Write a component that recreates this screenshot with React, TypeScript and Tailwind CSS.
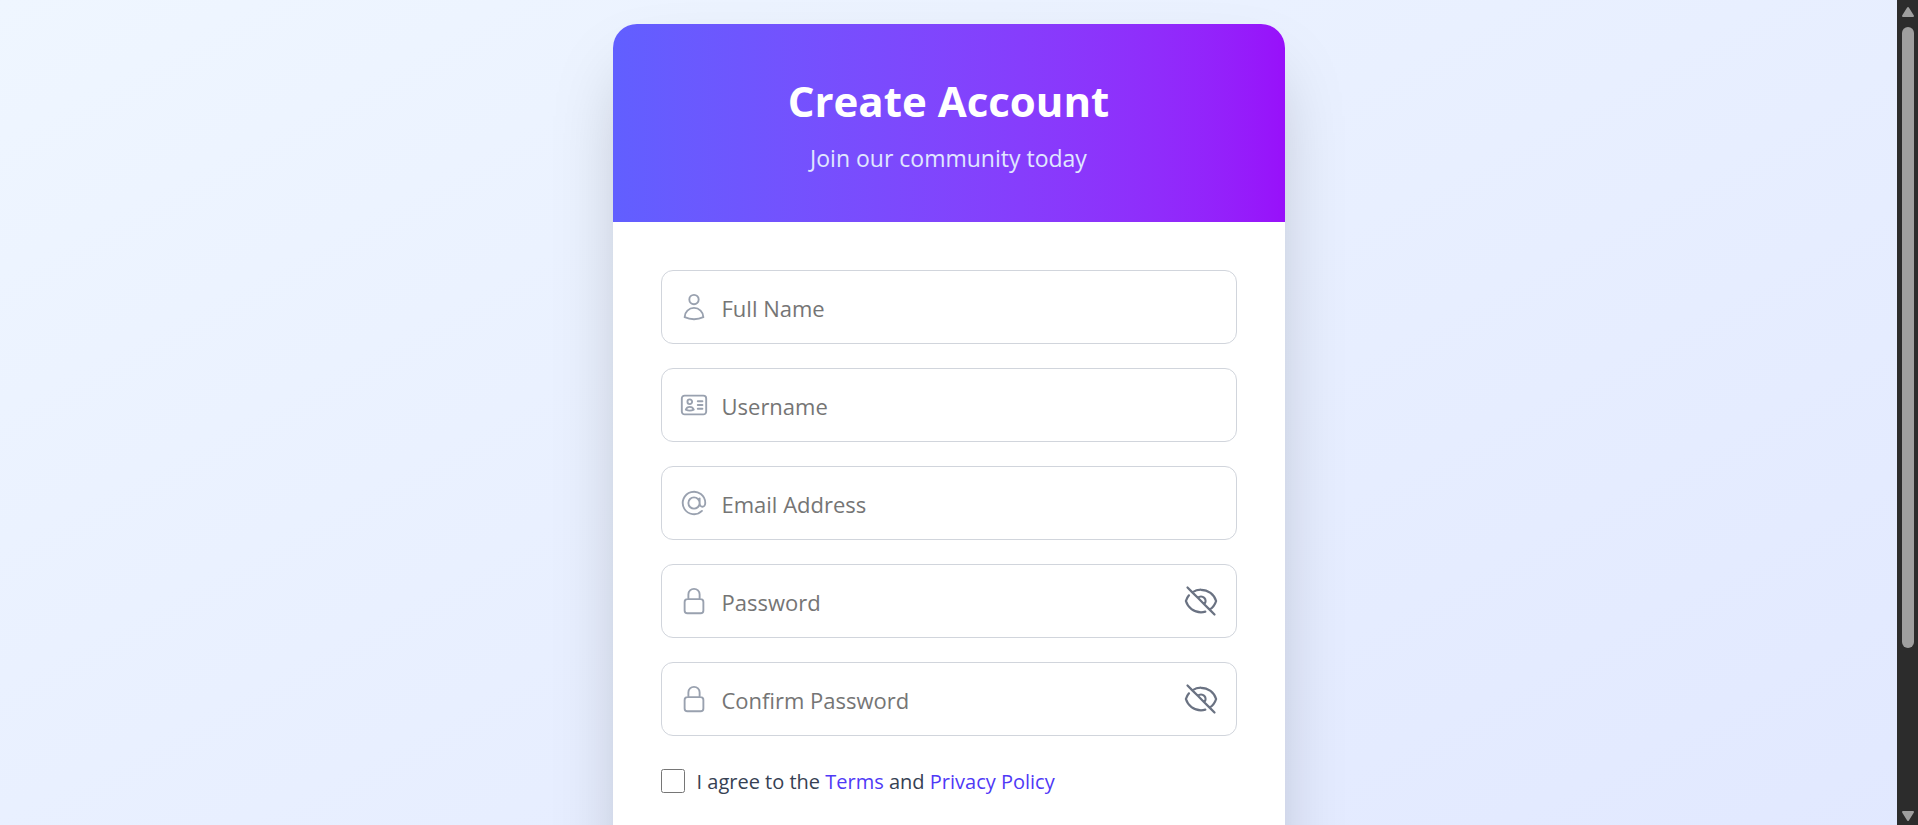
import { useState } from "react";
import type { ComponentType } from "react";
import {
  HiOutlineAtSymbol,
  HiOutlineEye,
  HiOutlineEyeSlash,
  HiOutlineIdentification,
  HiOutlineLockClosed,
  HiOutlineUser,
} from "react-icons/hi2";

type FieldProps = {
  id: string;
  type: "text" | "email" | "password";
  placeholder: string;
  icon: ComponentType<{ className?: string }>;
};

const fields: FieldProps[] = [
  { id: "name", type: "text", placeholder: "Full Name", icon: HiOutlineUser },
  { id: "username", type: "text", placeholder: "Username", icon: HiOutlineIdentification },
  { id: "email", type: "email", placeholder: "Email Address", icon: HiOutlineAtSymbol },
  { id: "password", type: "password", placeholder: "Password", icon: HiOutlineLockClosed },
  { id: "confirm", type: "password", placeholder: "Confirm Password", icon: HiOutlineLockClosed },
];

function Field({ id, type, placeholder, icon: Icon }: FieldProps) {
  const [visible, setVisible] = useState(false);
  const secret = type === "password";
  const Eye = visible ? HiOutlineEye : HiOutlineEyeSlash;

  return (
    <div className="flex h-[74px] items-center rounded-xl border border-[#d1d5dc] px-[17px] focus-within:border-indigo-500">
      <label htmlFor={id} className="shrink-0 text-[#99a1af]">
        <Icon className="size-[30px]" />
      </label>
      <input
        id={id}
        name={id}
        type={visible ? "text" : type}
        aria-label={placeholder}
        placeholder={placeholder}
        className="h-full min-w-0 flex-1 bg-transparent pt-0.5 pl-[13px] text-[22px] text-gray-800 outline-none placeholder:text-[#757575]"
      />
      {secret && (
        <button
          type="button"
          aria-label={visible ? "Hide" : "Show"}
          onClick={() => setVisible(!visible)}
          className="shrink-0 text-[#6a7282]"
        >
          <Eye className="size-9" />
        </button>
      )}
    </div>
  );
}

function Arrow({ down }: { down?: boolean }) {
  return (
    <svg viewBox="0 0 14 12" className="h-3 w-3.5 shrink-0" aria-hidden="true">
      <path
        d={down ? "M2 2h10l-5 8z" : "M2 10h10l-5 -8z"}
        fill="#9f9f9f"
        stroke="#9f9f9f"
        strokeWidth="2"
        strokeLinejoin="round"
      />
    </svg>
  );
}

function ScrollRail() {
  return (
    <div className="flex w-[21px] shrink-0 flex-col items-center bg-[#2c2c2c] pt-1.5 pb-[3px]" aria-hidden="true">
      <Arrow />
      <div className="w-3 flex-1 pt-[9px] pb-3">
        <div className="h-[80.5%] rounded-full bg-[#9f9f9f]" />
      </div>
      <Arrow down />
    </div>
  );
}

export default function App() {
  return (
    <div className="flex h-screen overflow-hidden font-['Open_Sans','Noto_Sans',sans-serif]">
      <main className="flex-1 overflow-hidden">
        <div className="flex min-h-full items-center justify-center bg-linear-to-br from-[#eff6ff] to-[#e0e7ff] p-6">
          <div className="w-full max-w-[672px] overflow-hidden rounded-3xl bg-white shadow-[0_38px_75px_-18px_rgba(0,0,0,0.25)]">
            <header className="bg-linear-to-r from-[#615fff] to-[#9810fa] px-12 pt-[50px] pb-[46px] text-center">
              <h1 className="text-[42px] leading-[54px] font-bold text-white">Create Account</h1>
              <p className="mt-3 text-[23px] leading-9 text-[#e0e7ff]">Join our community today</p>
            </header>
            <form className="px-12 pt-12 pb-[204px]">
              <div className="flex flex-col gap-6">
                {fields.map((field) => (
                  <Field key={field.id} {...field} />
                ))}
              </div>
              <div className="mt-[30px] flex items-center gap-3">
                <input
                  id="agree"
                  type="checkbox"
                  aria-label="I agree to the Terms and Privacy Policy"
                  className="size-6 shrink-0"
                />
                <label htmlFor="agree" className="pt-0.5 text-xl leading-7 text-[#364153]">
                  I agree to the{" "}
                  <a href="#terms" className="text-[#4f39f6]">
                    Terms
                  </a>{" "}
                  and{" "}
                  <a href="#privacy" className="text-[#4f39f6]">
                    Privacy Policy
                  </a>
                </label>
              </div>
            </form>
          </div>
        </div>
      </main>
      <ScrollRail />
    </div>
  );
}
